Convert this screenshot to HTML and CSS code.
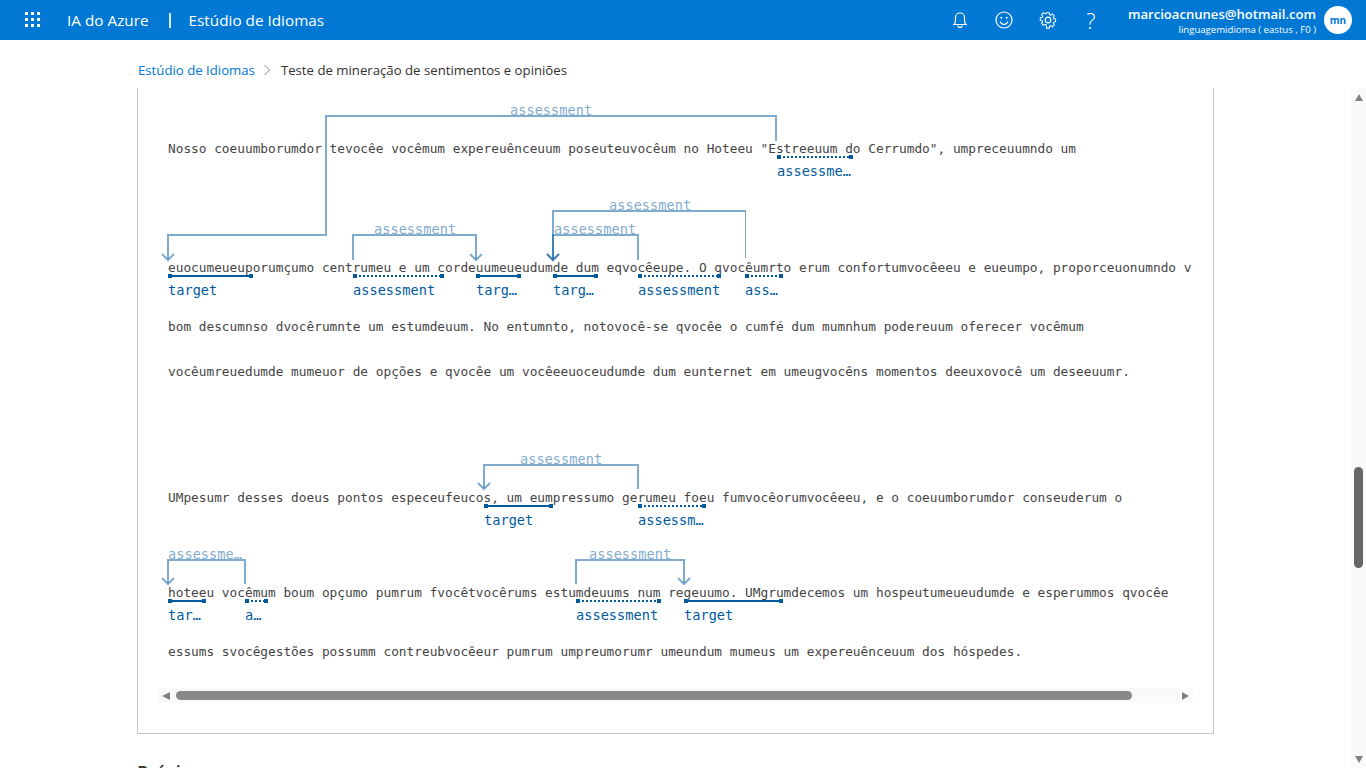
FILE: index.html
```html
<!DOCTYPE html>
<html lang="pt-BR">
<head>
  <meta charset="UTF-8">
  <title>Estúdio de Idiomas</title>
  <link rel="stylesheet" href="styles.css">
</head>
<body>
  <header class="topbar">
    <svg class="waffle" width="16" height="16" viewBox="0 0 16 16">
      <rect x="0" y="0" width="3" height="3"/><rect x="6" y="0" width="3" height="3"/><rect x="12" y="0" width="3" height="3"/>
      <rect x="0" y="6" width="3" height="3"/><rect x="6" y="6" width="3" height="3"/><rect x="12" y="6" width="3" height="3"/>
      <rect x="0" y="12" width="3" height="3"/><rect x="6" y="12" width="3" height="3"/><rect x="12" y="12" width="3" height="3"/>
    </svg>
    <span class="brand">IA do Azure</span>
    <span class="sep"></span>
    <span class="brand">Estúdio de Idiomas</span>
    <div class="spacer"></div>
    <svg class="ico ico-bell" width="16" height="18" viewBox="0 0 16 18">
      <path d="M2 13.500c1-1 1.500-2 1.500-4V6.500a4.500 4.500 0 0 1 9 0v3c0 2 .5 3 1.500 4z"/><path d="M6 14.500a2 2 0 0 0 4 0"/>
    </svg>
    <svg class="ico ico-smile" width="18" height="18" viewBox="0 0 18 18">
      <circle cx="9" cy="9" r="8"/><path d="M5 10.500c1 2 2.500 3 4 3s3-1 4-3"/>
      <circle class="dot" cx="6.300" cy="6.800" r="1"/><circle class="dot" cx="11.700" cy="6.800" r="1"/>
    </svg>
    <svg class="ico ico-gear" width="18" height="18" viewBox="0 0 18 18">
      <circle cx="9" cy="9" r="2.800"/>
      <path d="M7.400 1h3.200l.4 2.300 1.300.6 2-1.300 2.200 2.300-1.300 1.900.5 1.300 2.300.4v3.200l-2.300.4-.5 1.300 1.300 1.900-2.200 2.300-2-1.300-1.300.6-.4 2.300H7.400L7 15.300l-1.300-.6-2 1.300-2.200-2.300 1.300-1.900-.5-1.300L0 10.100V6.900l2.300-.4.5-1.300-1.300-1.900 2.200-2.300 2 1.300 1.300-.6z" transform="translate(1.300 .800) scale(.85)"/>
    </svg>
    <span class="help">?</span>
    <div class="account">
      <div class="account-mail">marcioacnunes@hotmail.com</div>
      <div class="account-res">linguagemidioma ( eastus , F0 )</div>
    </div>
    <div class="avatar">mn</div>
  </header>

  <nav class="crumbs">
    <a class="crumb-link">Estúdio de Idiomas</a>
    <svg class="crumb-chev" width="8" height="12" viewBox="0 0 8 12"><path d="M1.500 1l5 5-5 5"/></svg>
    <span class="crumb-now">Teste de mineração de sentimentos e opiniões</span>
  </nav>

  <div class="page">
    <main class="content">
      <section class="card">
        <div class="doc">
          <!-- viewBox usa as coordenadas da pagina -->
          <svg class="annot" width="1034" height="600" viewBox="158 88 1034 600">
            <text class="line" x="168" y="153">Nosso coeuumborumdor tevocêe vocêmum expereuênceuum poseuteuvocêum no Hoteeu "Estreeuum do Cerrumdo", umpreceuumndo um</text>
            <text class="line" x="168" y="272">euocumeueuporumçumo centrumeu e um cordeuumeueudumde dum eqvocêeupe. O qvocêumrto erum confortumvocêeeu e eueumpo, proporceuonumndo vocêm</text>
            <text class="line" x="168" y="331">bom descumnso dvocêrumnte um estumdeuum. No entumnto, notovocê-se qvocêe o cumfé dum mumnhum podereuum oferecer vocêmum</text>
            <text class="line" x="168" y="376">vocêumreuedumde mumeuor de opções e qvocêe um vocêeeuoceudumde dum eunternet em umeugvocêns momentos deeuxovocê um deseeuumr.</text>
            <text class="line" x="168" y="502">UMpesumr desses doeus pontos especeufeucos, um eumpressumo gerumeu foeu fumvocêorumvocêeeu, e o coeuumborumdor conseuderum o</text>
            <text class="line" x="168" y="597">hoteeu vocêmum boum opçumo pumrum fvocêtvocêrums estumdeuums num regeuumo. UMgrumdecemos um hospeutumeueudumde e esperummos qvocêe</text>
            <text class="line" x="168" y="656">essums svocêgestões possumm contreubvocêeur pumrum umpreumorumr umeundum mumeus um expereuênceuum dos hóspedes.</text>

            <path class="arc" d="M776 141V116H326V235H168V259"/><path class="arc" d="M162 254l6 6 6-6"/>
            <path class="arc" d="M353 260V235H476V259"/><path class="arc" d="M470 254l6 6 6-6"/>
            <path class="arc" d="M638 260V235H553V259"/><path class="arc" d="M547 254l6 6 6-6"/>
            <path class="arc" d="M745 211H553V259"/><path class="arc arc-thin" d="M745.500 210V258"/><path class="arc" d="M547 254l6 6 6-6"/>
            <path class="arc" d="M638 489V465H484V488"/><path class="arc" d="M478 483l6 6 6-6"/>
            <path class="arc" d="M245 584V560H168V583"/><path class="arc" d="M162 578l6 6 6-6"/>
            <path class="arc" d="M576 584V560H684V583"/><path class="arc" d="M678 578l6 6 6-6"/>

            <text class="rel" x="510" y="115">assessment</text>
            <text class="rel" x="374" y="234">assessment</text>
            <text class="rel" x="554" y="234">assessment</text>
            <text class="rel" x="609" y="210">assessment</text>
            <text class="rel" x="520" y="464">assessment</text>
            <text class="rel" x="168" y="559">assessme…</text>
            <text class="rel" x="589" y="559">assessment</text>

            <path class="span dotted" d="M779 157H851"/><path class="mark" d="M777 155h4v4h-4zM849 155h4v4h-4z"/>
            <path class="span" d="M170 276H251"/><path class="mark" d="M168 274h4v4h-4zM249 274h4v4h-4z"/>
            <path class="span dotted" d="M355 276H442"/><path class="mark" d="M353 274h4v4h-4zM440 274h4v4h-4z"/>
            <path class="span" d="M478 276H519"/><path class="mark" d="M476 274h4v4h-4zM517 274h4v4h-4z"/>
            <path class="span" d="M555 276H596"/><path class="mark" d="M553 274h4v4h-4zM594 274h4v4h-4z"/>
            <path class="span dotted" d="M640 276H719"/><path class="mark" d="M638 274h4v4h-4zM717 274h4v4h-4z"/>
            <path class="span dotted" d="M747 276H781"/><path class="mark" d="M745 274h4v4h-4zM779 274h4v4h-4z"/>
            <path class="span" d="M486 506H551"/><path class="mark" d="M484 504h4v4h-4zM549 504h4v4h-4z"/>
            <path class="span dotted" d="M640 506H704"/><path class="mark" d="M638 504h4v4h-4zM702 504h4v4h-4z"/>
            <path class="span" d="M170 601H204"/><path class="mark" d="M168 599h4v4h-4zM202 599h4v4h-4z"/>
            <path class="span dotted" d="M247 601H266"/><path class="mark" d="M245 599h4v4h-4zM264 599h4v4h-4z"/>
            <path class="span dotted" d="M578 601H659"/><path class="mark" d="M576 599h4v4h-4zM657 599h4v4h-4z"/>
            <path class="span" d="M686 601H781"/><path class="mark" d="M684 599h4v4h-4zM779 599h4v4h-4z"/>

            <text class="tag" x="777" y="176">assessme…</text>
            <text class="tag" x="168" y="295">target</text>
            <text class="tag" x="353" y="295">assessment</text>
            <text class="tag" x="476" y="295">targ…</text>
            <text class="tag" x="553" y="295">targ…</text>
            <text class="tag" x="638" y="295">assessment</text>
            <text class="tag" x="745" y="295">ass…</text>
            <text class="tag" x="484" y="525">target</text>
            <text class="tag" x="638" y="525">assessm…</text>
            <text class="tag" x="168" y="620">tar…</text>
            <text class="tag" x="245" y="620">a…</text>
            <text class="tag" x="576" y="620">assessment</text>
            <text class="tag" x="684" y="620">target</text>
          </svg>
        </div>
        <div class="hscroll">
          <span class="arrow arrow-left"></span>
          <div class="hscroll-track"><div class="hscroll-thumb"></div></div>
          <span class="arrow arrow-right"></span>
        </div>
      </section>
      <h3 class="next-title">Prévia</h3>
    </main>
    <aside class="vscroll">
      <span class="arrow arrow-up"></span>
      <div class="vscroll-track"><div class="vscroll-thumb"></div></div>
      <span class="arrow arrow-down"></span>
    </aside>
  </div>
</body>
</html>
```

FILE: styles.css
```css
html, body { margin: 0; height: 100%; overflow: hidden; }
body { display: flex; flex-direction: column; background: #fff; font-family: "Open Sans", "Liberation Sans", sans-serif; color: #323130; }

.topbar { display: flex; align-items: center; flex: 0 0 40px; background: #0078d4; color: #fff; padding-left: 25px; }
.waffle { fill: #fff; margin-right: 26px; }
.brand { font-size: 15.300px; }
.sep { width: 2px; height: 15px; background: #dcebf8; margin: 0 18px 0 20px; }
.spacer { flex: 1; }
.ico { fill: none; stroke: #fff; stroke-width: 1.200; }
.ico .dot { fill: #fff; stroke: none; }
.ico-bell { margin-right: 27px; }
.ico-smile { margin-right: 26px; }
.ico-gear { margin-right: 27px; }
.help { font-size: 22px; font-weight: 300; width: 14px; margin-right: 30px; text-align: center; }
.account { text-align: right; margin-right: 8px; padding-top: 2px; }
.account-mail { font-size: 13.100px; font-weight: 600; line-height: 17px; }
.account-res { font-size: 9.600px; line-height: 14px; }
.avatar { width: 28px; height: 28px; margin-right: 14px; border-radius: 50%; background: #fff; color: #0078d4; font-size: 10px; font-weight: 700; text-align: center; line-height: 28px; }

.crumbs { display: flex; align-items: center; flex: 0 0 48px; box-sizing: border-box; padding: 11px 0 0 138px; font-size: 13.200px; }
.crumb-link { color: #0078d4; }
.crumb-chev { fill: none; stroke: #8a8886; margin: 0 10px 0 8px; }
.crumb-now { color: #323130; }

.page { display: flex; flex: 1; min-height: 0; }
.content { flex: 1; min-width: 0; padding-left: 137px; }
.card { width: 1055px; height: 645px; border: 1px solid #c8c8c8; border-top: 0; padding-left: 20px; }
.doc { width: 1034px; height: 600px; overflow: hidden; }
.annot { display: block; }

.line { font: 12.790px "DejaVu Sans Mono", monospace; fill: #444; }
.rel { font: 13.650px "DejaVu Sans Mono", monospace; fill: #005a9e; opacity: .5; }
.tag { font: 13.650px "DejaVu Sans Mono", monospace; fill: #005a9e; }
.arc { fill: none; stroke: #005a9e; stroke-width: 2; opacity: .5; }
.arc-thin { stroke-width: 1; }
.span { fill: none; stroke: #005a9e; stroke-width: 2; }
.dotted { stroke-dasharray: 2 2; }
.mark { fill: #005a9e; }

.hscroll { display: flex; align-items: center; width: 1035px; height: 15px; background: #fafafa; }
.hscroll-track { flex: 1; padding: 0 50px 0 6px; }
.hscroll-thumb { height: 9px; border-radius: 5px; background: #888; }
.arrow { display: block; width: 0; height: 0; border-style: solid; border-color: transparent; flex: none; }
.arrow-left { margin-left: 4px; border-width: 4.500px 8px 4.500px 0; border-right-color: #808080; }
.arrow-right { margin-right: 4px; border-width: 4.500px 0 4.500px 7px; border-left-color: #808080; }
.arrow-up { margin: 6px auto 0; border-width: 0 4.500px 7px; border-bottom-color: #808080; }
.arrow-down { margin: 0 auto 5px; border-width: 7px 4.500px 0; border-top-color: #808080; }

.next-title { margin: 26px 0 0; font-size: 18px; font-weight: 600; line-height: 24px; }

.vscroll { display: flex; flex-direction: column; flex: 0 0 15px; background: #fafafa; }
.vscroll-track { flex: 1; padding: 366px 3px 0 3px; }
.vscroll-thumb { height: 101px; border-radius: 5px; background: #666; }
```
